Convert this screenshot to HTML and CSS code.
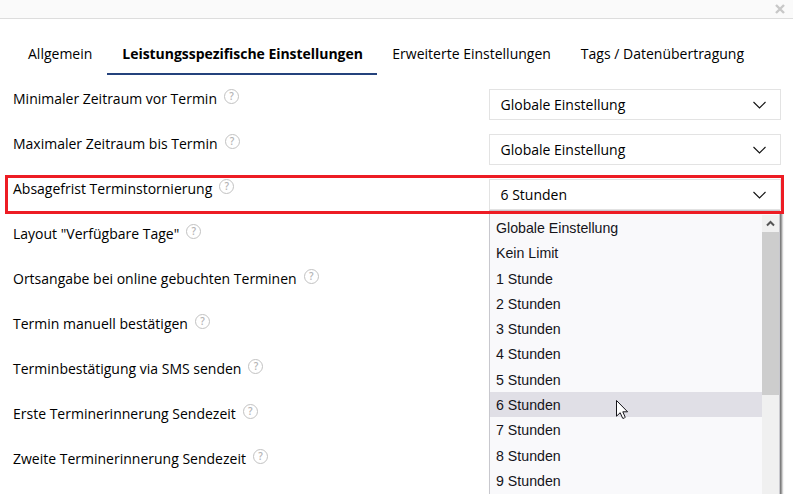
FILE: index.html
```html
<!DOCTYPE html>
<html lang="de">
  <head>
    <title>Leistungsspezifische Einstellungen</title>
    <meta charset="utf-8">
    <meta name="viewport" content="width=device-width, initial-scale=1">
    <link rel="stylesheet" href="styles.css">
  </head>
  <body>
    <header class="dialog-header">
      <svg class="close" viewBox="0 0 10 10"><path d="M1 1L9 9M9 1L1 9"/></svg>
    </header>

    <nav class="tabs">
      <a class="tab">Allgemein</a>
      <a class="tab active">Leistungsspezifische Einstellungen</a>
      <a class="tab">Erweiterte Einstellungen</a>
      <a class="tab">Tags / Datenübertragung</a>
    </nav>

    <main class="settings">
      <section class="row">
        <div class="label"><span>Minimaler Zeitraum vor Termin</span><i class="help">?</i></div>
        <div class="select">Globale Einstellung<svg class="chevron" viewBox="0 0 13 8"><path d="M.5 1L6.5 7L12.5 1"/></svg></div>
      </section>
      <section class="row">
        <div class="label"><span>Maximaler Zeitraum bis Termin</span><i class="help">?</i></div>
        <div class="select">Globale Einstellung<svg class="chevron" viewBox="0 0 13 8"><path d="M.5 1L6.5 7L12.5 1"/></svg></div>
      </section>
      <section class="row marked">
        <div class="label"><span>Absagefrist Terminstornierung</span><i class="help">?</i></div>
        <div class="select">6 Stunden<svg class="chevron" viewBox="0 0 13 8"><path d="M.5 1L6.5 7L12.5 1"/></svg></div>
        <!-- open option list -->
        <div class="dropdown">
          <ul class="options">
            <li>Globale Einstellung</li>
            <li>Kein Limit</li>
            <li>1 Stunde</li>
            <li>2 Stunden</li>
            <li>3 Stunden</li>
            <li>4 Stunden</li>
            <li>5 Stunden</li>
            <li class="selected">6 Stunden</li>
            <li>7 Stunden</li>
            <li>8 Stunden</li>
            <li>9 Stunden</li>
          </ul>
          <div class="scrollbar">
            <svg class="scroll-up" viewBox="0 0 17 17"><path d="M5 10.5L8.5 7L12 10.5"/></svg>
            <div class="thumb"></div>
          </div>
        </div>
      </section>
      <section class="row">
        <div class="label"><span>Layout "Verfügbare Tage"</span><i class="help">?</i></div>
      </section>
      <section class="row">
        <div class="label"><span>Ortsangabe bei online gebuchten Terminen</span><i class="help">?</i></div>
      </section>
      <section class="row">
        <div class="label"><span>Termin manuell bestätigen</span><i class="help">?</i></div>
      </section>
      <section class="row">
        <div class="label"><span>Terminbestätigung via SMS senden</span><i class="help">?</i></div>
      </section>
      <section class="row">
        <div class="label"><span>Erste Terminerinnerung Sendezeit</span><i class="help">?</i></div>
      </section>
      <section class="row">
        <div class="label"><span>Zweite Terminerinnerung Sendezeit</span><i class="help">?</i></div>
      </section>
    </main>

    <svg class="cursor" viewBox="0 0 12 19"><path d="M.5 .5V16.2L4.2 12.7L6.6 18.2Q8.5 18.8 9.2 17.2L6.8 11.8H11.6Z"/></svg>
  </body>
</html>
```

FILE: styles.css
```css
body {
  background: #fff;
  color: #000;
  font-family: "Open Sans", sans-serif;
  font-size: 14px;
  height: 494px;
  margin: 0;
  overflow: hidden;
  position: relative;
}

.dialog-header {
  background: #fafafa;
  border-bottom: 1px solid #ddd;
  box-sizing: border-box;
  display: flex;
  height: 19px;
  justify-content: flex-end;
  padding: 4px 8px 0 0;
}

.close {
  fill: none;
  height: 10px;
  stroke: #c8c8c8;
  stroke-width: 2.4;
  width: 10px;
}

.tabs {
  display: flex;
  height: 40px;
  margin: 16px 0 0 13px;
}

.tab {
  box-sizing: border-box;
  line-height: 37px;
  padding: 0 15px;
  white-space: nowrap;
}

.tab.active {
  border-bottom: 2px solid #24427c;
  font-weight: 700;
  letter-spacing: -.04px;
  width: 270px;
}

.settings {
  padding: 14px 12px 0 13px;
}

.row {
  display: flex;
  height: 45px;
  justify-content: space-between;
  position: relative;
}

.label {
  display: flex;
  line-height: 20px;
  white-space: nowrap;
}

.help {
  border: 1px solid #c2c2c2;
  border-radius: 50%;
  box-sizing: border-box;
  color: #b4b4b4;
  font-size: 10px;
  font-style: normal;
  font-weight: 600;
  height: 15px;
  line-height: 13px;
  margin-left: 7px;
  text-align: center;
  width: 15px;
}

.select {
  align-items: center;
  border: 1px solid #e3e3e3;
  box-sizing: border-box;
  display: flex;
  height: 31px;
  justify-content: space-between;
  padding: 0 14px 0 10.5px;
  width: 292px;
}

.chevron {
  fill: none;
  height: 8px;
  stroke: #111;
  stroke-width: 1.1;
  width: 13px;
}

/* red frame round the row */
.marked::after {
  border: 3px solid #ed1c24;
  content: "";
  height: 33px;
  left: -8px;
  position: absolute;
  right: -3px;
  top: -4px;
}

.dropdown {
  background: #f9f9fb;
  border: 1px solid #c8c8ce;
  border-bottom: 0;
  box-shadow: 2px 2px 2px rgba(0, 0, 0, .55);
  box-sizing: border-box;
  display: flex;
  height: 284px;
  padding-top: 4px;
  position: absolute;
  right: 1px;
  top: 31px;
  width: 291px;
}

.options {
  color: #15141a;
  flex: 1;
  font-family: "Liberation Sans", Arial, sans-serif;
  font-size: 14.2px;
  list-style: none;
  margin: 0;
  padding: 0;
}

.options li {
  height: 25.3px;
  line-height: 26.7px;
  padding-left: 6px;
}

.options .selected {
  background: #e0dfe6;
}

.scrollbar {
  background: #f0f0f0;
  width: 17px;
}

.scroll-up {
  display: block;
  fill: none;
  height: 17px;
  stroke: #555;
  stroke-width: 2;
  width: 17px;
}

.thumb {
  background: #cdcdcd;
  height: 163px;
}

.cursor {
  fill: #fff;
  height: 19px;
  left: 616px;
  position: absolute;
  stroke: #15141a;
  top: 400px;
  width: 12px;
}
```
